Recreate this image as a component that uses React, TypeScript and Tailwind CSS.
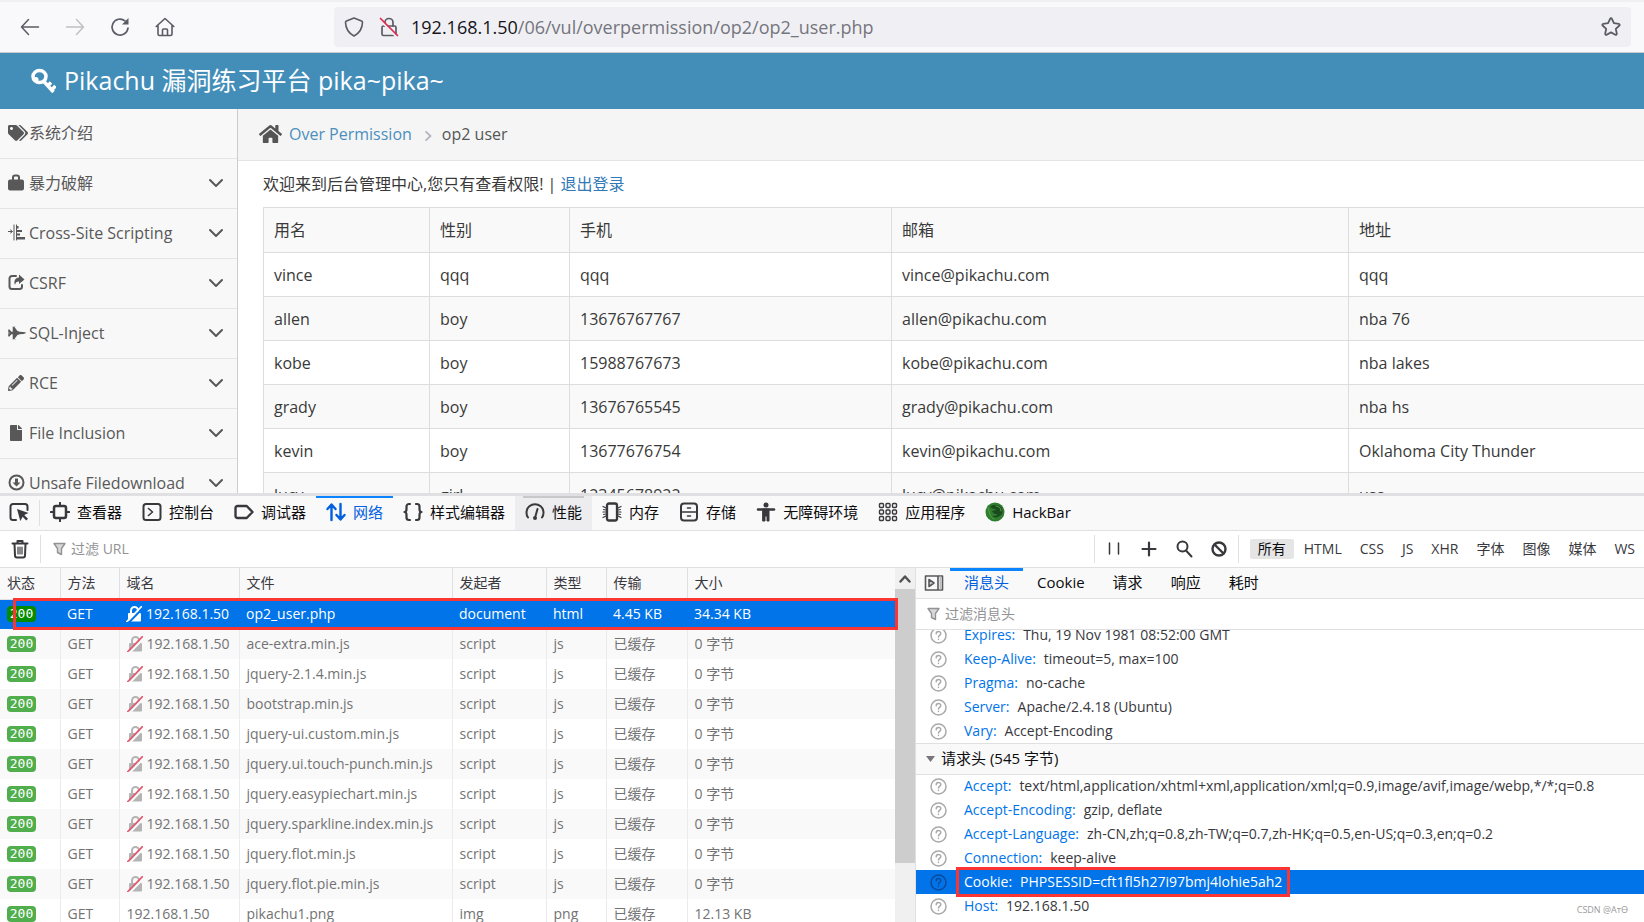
import { useState, type ReactNode } from 'react';
import { FaFighterJet, FaFile, FaHome, FaPencilAlt, FaTags } from 'react-icons/fa';

const MENU = [
  { label: '系统介绍', icon: 'tags' },
  { label: '暴力破解', icon: 'lock' },
  { label: 'Cross-Site Scripting', icon: 'indent' },
  { label: 'CSRF', icon: 'share' },
  { label: 'SQL-Inject', icon: 'jet' },
  { label: 'RCE', icon: 'pencil' },
  { label: 'File Inclusion', icon: 'file' },
  { label: 'Unsafe Filedownload', icon: 'down' },
];

const USERS = [
  ['vince', 'qqq', 'qqq', 'vince@pikachu.com', 'qqq'],
  ['allen', 'boy', '13676767767', 'allen@pikachu.com', 'nba 76'],
  ['kobe', 'boy', '15988767673', 'kobe@pikachu.com', 'nba lakes'],
  ['grady', 'boy', '13676765545', 'grady@pikachu.com', 'nba hs'],
  ['kevin', 'boy', '13677676754', 'kevin@pikachu.com', 'Oklahoma City Thunder'],
  ['lucy', 'girl', '12345678922', 'lucy@pikachu.com', 'usa'],
];

const TOOLS = [
  { label: '查看器', icon: 'inspector' },
  { label: '控制台', icon: 'console' },
  { label: '调试器', icon: 'debugger' },
  { label: '网络', icon: 'network' },
  { label: '样式编辑器', icon: 'style' },
  { label: '性能', icon: 'performance' },
  { label: '内存', icon: 'memory' },
  { label: '存储', icon: 'storage' },
  { label: '无障碍环境', icon: 'a11y' },
  { label: '应用程序', icon: 'apps' },
  { label: 'HackBar', icon: 'hackbar' },
];

const FILTERS = ['所有', 'HTML', 'CSS', 'JS', 'XHR', '字体', '图像', '媒体', 'WS'];

const script = (file: string) => ({ file, initiator: 'script', type: 'js', transfer: '已缓存', size: '0 字节', insecure: true });

const REQUESTS = [
  { file: 'op2_user.php', initiator: 'document', type: 'html', transfer: '4.45 KB', size: '34.34 KB', insecure: true },
  script('ace-extra.min.js'),
  script('jquery-2.1.4.min.js'),
  script('bootstrap.min.js'),
  script('jquery-ui.custom.min.js'),
  script('jquery.ui.touch-punch.min.js'),
  script('jquery.easypiechart.min.js'),
  script('jquery.sparkline.index.min.js'),
  script('jquery.flot.min.js'),
  script('jquery.flot.pie.min.js'),
  { file: 'pikachu1.png', initiator: 'img', type: 'png', transfer: '已缓存', size: '12.13 KB', insecure: false },
];

const RESPONSE_HEADERS = [
  ['Expires', 'Thu, 19 Nov 1981 08:52:00 GMT'],
  ['Keep-Alive', 'timeout=5, max=100'],
  ['Pragma', 'no-cache'],
  ['Server', 'Apache/2.4.18 (Ubuntu)'],
  ['Vary', 'Accept-Encoding'],
];

const REQUEST_HEADERS = [
  ['Accept', 'text/html,application/xhtml+xml,application/xml;q=0.9,image/avif,image/webp,*/*;q=0.8'],
  ['Accept-Encoding', 'gzip, deflate'],
  ['Accept-Language', 'zh-CN,zh;q=0.8,zh-TW;q=0.7,zh-HK;q=0.5,en-US;q=0.3,en;q=0.2'],
  ['Connection', 'keep-alive'],
  ['Cookie', 'PHPSESSID=cft1fl5h27i97bmj4lohie5ah2'],
  ['Host', '192.168.1.50'],
];

function Icon({ size = 20, box = 20, width = 2, children }: { size?: number; box?: number; width?: number; children: ReactNode }) {
  return (
    <svg
      width={size}
      height={size}
      viewBox={`0 0 ${box} ${box}`}
      fill="none"
      stroke="currentColor"
      strokeWidth={width}
      strokeLinecap="round"
      strokeLinejoin="round"
      className="shrink-0"
      aria-hidden="true"
    >
      {children}
    </svg>
  );
}

function MenuIcon({ name }: { name: string }) {
  switch (name) {
    case 'tags':
      return <FaTags className="h-[18px] w-5" />;
    case 'jet':
      return <FaFighterJet className="h-4 w-[18px]" />;
    case 'pencil':
      return <FaPencilAlt className="h-4 w-4" />;
    case 'file':
      return <FaFile className="h-4 w-4" />;
    case 'lock':
      return (
        <Icon size={17} box={17}>
          <path d="M5 6V3.5A2 2 0 0 1 7 1.5h2a2 2 0 0 1 2 2V6" />
          <rect x="1" y="6.500" width="14" height="9" rx="1" fill="currentColor" />
        </Icon>
      );
    case 'indent':
      return (
        <Icon size={17} box={17} width={1}>
          <path d="M0 7.500h4M2.500 6l2 1.500-2 1.500M6 1v15" />
          <path d="M8 2h2.500v2.500H8zM8 6h6v2H8zM8 9.500h4v2H8zM8 13h9v2.500H8z" fill="currentColor" stroke="none" />
          <path d="M8.500 1v15" />
        </Icon>
      );
    case 'share':
      return (
        <Icon size={17} box={17}>
          <path d="M8 2H4a2.500 2.500 0 0 0-2.500 2.500v8A2.500 2.500 0 0 0 4 15h7.500a2.500 2.500 0 0 0 2.500-2.500V11" />
          <path d="M11 .5 16.500 5.500 11 10V7.500C8.500 7.500 7.500 8.500 7 11 5.500 7 7 4 11 3.500z" fill="currentColor" stroke="none" />
        </Icon>
      );
    default:
      return (
        <Icon size={17} box={17}>
          <circle cx="8.500" cy="8.500" r="7" />
          <path d="M7 4.500h3v4h2.500l-4 4-4-4H7z" fill="currentColor" stroke="none" />
        </Icon>
      );
  }
}

function ToolIcon({ name }: { name: string }) {
  switch (name) {
    case 'inspector':
      return (
        <Icon>
          <rect x="4" y="4" width="12" height="12" rx="2" strokeWidth="2.5" />
          <path d="M10 .8V3M10 17v2.200M.8 10H3M17 10h2.200" />
        </Icon>
      );
    case 'console':
      return (
        <Icon>
          <rect x="1.500" y="2" width="17" height="16" rx="2.500" />
          <path d="m6.500 6.500 4 3.500-4 3.500" strokeWidth="1.600" />
        </Icon>
      );
    case 'debugger':
      return (
        <Icon width={2.4}>
          <path d="M3.500 4h9.200L18.500 10l-5.800 6H3.500a2 2 0 0 1-2-2V6a2 2 0 0 1 2-2z" />
        </Icon>
      );
    case 'network':
      return (
        <Icon width={2.4}>
          <path d="M5.500 18V3M1.500 7l4-4.500 4 4.500M14.500 2v15M10.500 13l4 4.500 4-4.500" />
        </Icon>
      );
    case 'style':
      return (
        <Icon width={2.2}>
          <path d="M7 2H6a2.500 2.500 0 0 0-2.500 2.500V7c0 2-1 3-2 3 1 0 2 1 2 3v2.500A2.500 2.500 0 0 0 6 18h1M13 2h1a2.500 2.500 0 0 1 2.500 2.500V7c0 2 1 3 2 3-1 0-2 1-2 3v2.500A2.500 2.500 0 0 1 14 18h-1" />
        </Icon>
      );
    case 'performance':
      return (
        <Icon>
          <path d="M3 15.500A8.500 8.500 0 1 1 17 15.500" />
          <path d="M12.500 7 10.500 14" />
          <circle cx="10" cy="16" r="2" fill="currentColor" stroke="none" />
        </Icon>
      );
    case 'memory':
      return (
        <Icon>
          <rect x="5" y="1.500" width="10" height="17" rx="2" strokeWidth="2.300" />
          <path d="M1 4.500 4 6M1 10h3M1 15.500 4 14M19 4.500 16 6M19 10h-3M19 15.500 16 14M1.500 7.500 4 8M1.500 12.500 4 12M18.500 7.500 16 8M18.500 12.500 16 12" strokeWidth="1.200" />
        </Icon>
      );
    case 'storage':
      return (
        <Icon>
          <rect x="2" y="1.500" width="16" height="17" rx="3" />
          <path d="M2 10h16M8.500 6h3M8.500 14h3" strokeWidth="1.600" />
        </Icon>
      );
    case 'a11y':
      return (
        <Icon>
          <circle cx="10" cy="3" r="2.500" fill="currentColor" stroke="none" />
          <path d="M2 7.500h16" strokeWidth="2.500" />
          <path d="M7 7h6v12h-2v-5H9v5H7z" fill="currentColor" strokeWidth="1" />
        </Icon>
      );
    case 'apps':
      return (
        <Icon width={1.4}>
          {[1.5, 8, 14.5].map((y) => [1.5, 8, 14.5].map((x) => <rect key={`${x}-${y}`} x={x} y={y} width="4" height="4" rx="1" />))}
        </Icon>
      );
    default:
      return (
        <Icon width={1}>
          <circle cx="10" cy="10" r="9.500" fill="#2f7d2f" stroke="none" />
          <path d="M5 5c3-3 8-3 11 0 2 3 2 6 0 8-3 3-7 3-9 1 2 0 5 0 6-2-3 1-5-1-6-3 2 0 3-1 4-2-3 0-4-1-6-2z" fill="#1c4a1f" stroke="none" />
          <path d="M3 6c2 5 1 8 6 11" stroke="#57a34b" />
          <path d="M11 4c3 0 5 2 5 5" stroke="#57a34b" />
        </Icon>
      );
  }
}

function Funnel() {
  return (
    <Icon size={14} box={14} width={1.4}>
      <path d="M1 1.500h11L8.500 6.500V12.500l-4-2v-4z" fill="#d8d8da" />
    </Icon>
  );
}

function BrokenLock({ selected }: { selected: boolean }) {
  return (
    <svg width="16" height="16" viewBox="1 1 16 16" fill="none" className="shrink-0" aria-hidden="true">
      <path d="M6 8V5.500a3.500 3.500 0 0 1 7 0V8" stroke={selected ? '#fff' : '#b4b4b5'} strokeWidth="2" />
      <rect x="3" y="8" width="13" height="8.500" rx="1" fill={selected ? '#fff' : '#b4b4b5'} />
      <path d="M3 18.500 18 3" stroke={selected ? '#0074e8' : '#f9f9fa'} strokeWidth="2" />
      <path d="M1.800 16.500 16.500 1.500" stroke={selected ? '#fff' : '#e5566d'} strokeWidth="1.600" strokeLinecap="round" />
    </svg>
  );
}

function HeaderRow({ name, value, selected = false }: { name: string; value: string; selected?: boolean }) {
  return (
    <div className={`flex h-6 shrink-0 items-center pl-3.5 ${selected ? 'bg-[#0074e8] text-white' : 'text-[#38383d]'}`}>
      <a href="#help" aria-label={`${name} help`} className={selected ? 'text-[#0a4a9c]' : 'text-[#a9a9ac]'}>
        <Icon size={17} box={17} width={1.5}>
          <circle cx="8.500" cy="8.500" r="7.500" />
          <path d="M6.200 6.800c0-3 4.600-3 4.600-.2 0 1.700-2.300 1.700-2.300 3.400M8.500 12.300v.2" />
        </Icon>
      </a>
      <div className="relative ml-[17px] whitespace-nowrap">
        <span className={selected ? '' : 'text-[#0074e8]'}>{name}:</span>
        <span className="ml-2">{value}</span>
        {selected && <span className="absolute -inset-x-2 -inset-y-[5px] border-3 border-[#fb3434]" />}
      </div>
    </div>
  );
}

function BrowserBar() {
  return (
    <header className="flex h-[53px] shrink-0 items-center border-t-2 border-b border-t-[#f0f0f4] border-b-[#ccccce] bg-[#f9f9fb] pr-[13px] pl-5 text-[#5b5b66]">
      <nav className="flex items-center gap-[25px]">
        <button aria-label="后退">
          <Icon width={1.5}>
            <path d="M18.500 10H1.500M8.500 2.500 1.500 10l7 7.500" />
          </Icon>
        </button>
        <button aria-label="前进" disabled className="text-[#c0c0c5]">
          <Icon width={1.5}>
            <path d="M1.500 10h17M11.500 2.500l7 7.500-7 7.500" />
          </Icon>
        </button>
        <button aria-label="刷新">
          <Icon width={1.7}>
            <path d="M18 11a8 8 0 1 1-3-7.200" />
            <path d="M18.500 1v6.500H12z" fill="currentColor" stroke="none" />
          </Icon>
        </button>
        <button aria-label="主页">
          <Icon width={1.6}>
            <path d="m1.200 9.500 8.800-8 8.800 8M3 8.500V17a1.500 1.500 0 0 0 1.500 1.500h11A1.500 1.500 0 0 0 17 17V8.500M7.500 18.500V13a1 1 0 0 1 1-1h3a1 1 0 0 1 1 1v5.500" />
          </Icon>
        </button>
      </nav>
      <div className="ml-[159px] flex h-10 flex-1 items-center rounded bg-[#f0f0f4] px-2.5">
        <Icon width={1.6}>
          <path d="M10 1 2.500 4c-.7.300-1 .7-1 1.400.2 6 2.500 10.500 8.500 13.600 6-3.100 8.300-7.600 8.500-13.600 0-.7-.3-1.100-1-1.400z" />
        </Icon>
        <span className="ml-[15px]">
          <Icon width={1.7}>
            <path d="M6 9V5.500a4 4 0 0 1 8 0V9" />
            <rect x="3" y="9" width="14" height="9.500" rx="1.500" />
            <path d="M1.500 3.500 17 19.500" stroke="#f0f0f4" strokeWidth="2" />
            <path d="M1.500 1.500 18.500 18.500" stroke="#e22850" />
          </Icon>
        </span>
        <div className="ml-3 flex-1 text-lg text-[#75757d]">
          <span className="text-[#15141a]">192.168.1.50</span>/06/vul/overpermission/op2/op2_user.php
        </div>
        <button aria-label="添加书签">
          <Icon width={1.8}>
            <path d="M9.100 1.800a1 1 0 0 1 1.800 0l2 4.400 4.900.6a1 1 0 0 1 .6 1.700l-3.600 3.300 1 4.900a1 1 0 0 1-1.500 1L10 15.400l-4.300 2.300a1 1 0 0 1-1.500-1l1-4.900L1.600 8.500a1 1 0 0 1 .6-1.700l4.900-.6z" />
          </Icon>
        </button>
      </div>
    </header>
  );
}

function SitePage() {
  return (
    <div className="flex min-h-0 flex-1 flex-col overflow-hidden text-base">
      <div className="flex h-14 shrink-0 items-center bg-[#438eb9] pl-[30px] text-white">
        <svg width="26" height="26" viewBox="0 0 26 26" fill="none" stroke="currentColor" aria-hidden="true">
          <ellipse cx="9.500" cy="8.500" rx="6.500" ry="6" strokeWidth="3.500" />
          <path d="M13 12.500 23.500 24" strokeWidth="3.500" />
          <path d="m17.500 18 3.500-3.500M21.500 22l4-4" strokeWidth="3.500" />
          <circle cx="6" cy="11.500" r="2.500" fill="currentColor" stroke="none" />
        </svg>
        <h1 className="ml-2 text-[25px]">Pikachu 漏洞练习平台 pika~pika~</h1>
      </div>
      <div className="flex min-h-0 flex-1">
        <ul className="w-[238px] shrink-0 overflow-hidden border-r border-[#ccc] bg-[#f8f8f8] text-[#585858]">
          {MENU.map((item, i) => (
            <li key={item.label}>
              <a href="#menu" className="flex h-[50px] items-center border-b border-[#e5e5e5] pr-3.5 pb-0.5 pl-2">
                <span className="flex w-[21px] shrink-0">
                  <MenuIcon name={item.icon} />
                </span>
                <span className="flex-1">{item.label}</span>
                {i > 0 && (
                  <Icon size={14} box={14}>
                    <path d="m1 4 6 6 6-6" />
                  </Icon>
                )}
              </a>
            </li>
          ))}
        </ul>
        <main className="min-w-0 flex-1 bg-white text-[#393939]">
          <nav className="flex h-[52px] items-center border-b border-[#e5e5e5] bg-[#f5f5f5] pb-0.5 pl-[21px] text-[#555]">
            <FaHome className="h-6 w-[23px]" />
            <a href="#over" className="ml-[7px] text-[#4c8fbd]">
              Over Permission
            </a>
            <span className="mt-1 mr-2 ml-3 text-[#b2b6bf]">
              <Icon size={10} box={10} width={1.8}>
                <path d="m2 .8 4.500 4.200L2 9.200" />
              </Icon>
            </span>
            <span>op2 user</span>
          </nav>
          <div className="pl-[25px]">
            <p className="flex h-[46px] items-center">
              <span>欢迎来到后台管理中心,您只有查看权限! |&nbsp;</span>
              <a href="#logout" className="text-[#337ab7]">
                退出登录
              </a>
            </p>
            <table className="w-full table-fixed border-collapse">
              <colgroup>
                <col className="w-[166px]" />
                <col className="w-[140px]" />
                <col className="w-[322px]" />
                <col className="w-[457px]" />
                <col />
              </colgroup>
              <thead>
                <tr className="h-[45px] bg-[#f9f9f9] text-left">
                  {['用名', '性别', '手机', '邮箱', '地址'].map((h) => (
                    <th key={h} className="border border-r-0 border-[#ddd] px-2.5 font-normal">
                      {h}
                    </th>
                  ))}
                </tr>
              </thead>
              <tbody>
                {USERS.map((row) => (
                  <tr key={row[0]} className="h-11 even:bg-[#f9f9f9]">
                    {row.map((cell, i) => (
                      <td key={i} className="border border-r-0 border-[#ddd] px-2.5">
                        {cell}
                      </td>
                    ))}
                  </tr>
                ))}
              </tbody>
            </table>
          </div>
        </main>
      </div>
    </div>
  );
}

function RequestList() {
  const [selected, setSelected] = useState(0);

  return (
    <div className="flex min-h-0 overflow-hidden">
      <div className="relative min-w-0 flex-1">
        <table className="w-full table-fixed border-collapse text-sm text-[#737373]">
          <colgroup>
            <col className="w-[60px]" />
            <col className="w-[59px]" />
            <col className="w-[120px]" />
            <col className="w-[213px]" />
            <col className="w-[94px]" />
            <col className="w-[60px]" />
            <col className="w-[81px]" />
            <col />
          </colgroup>
          <thead>
            <tr className="h-[31px] border-b border-[#e0e0e2] bg-[#f9f9fa] text-left text-[#38383d]">
              {['状态', '方法', '域名', '文件', '发起者', '类型', '传输', '大小'].map((h) => (
                <th key={h} className="border-r border-[#e0e0e2] px-[7px] font-normal last:border-r-0">
                  {h}
                </th>
              ))}
            </tr>
          </thead>
          <tbody>
            {REQUESTS.map((r, i) => {
              const active = i === selected;
              const line = active ? 'px-[7px]' : 'border-r border-[#ebebed] px-[7px]';
              return (
                <tr
                  key={r.file}
                  onClick={() => setSelected(i)}
                  className={`h-[30px] whitespace-nowrap ${active ? 'bg-[#0074e8] text-white' : 'odd:bg-white even:bg-[#f9f9fa]'}`}
                >
                  <td className={line}>
                    <span
                      className={`flex h-4 w-[29px] items-center justify-center rounded font-['DejaVu_Sans_Mono',monospace] text-[13px] text-white ${active ? 'bg-[#058b00]' : 'bg-[#50ae4c]'}`}
                    >
                      200
                    </span>
                  </td>
                  <td className={line}>GET</td>
                  <td className={line}>
                    <span className="flex items-center gap-1">
                      {r.insecure && <BrokenLock selected={active} />}
                      192.168.1.50
                    </span>
                  </td>
                  <td className={line}>{r.file}</td>
                  <td className={line}>{r.initiator}</td>
                  <td className={line}>{r.type}</td>
                  <td className={line}>{r.transfer}</td>
                  <td className="px-[7px]">{r.size}</td>
                </tr>
              );
            })}
          </tbody>
        </table>
        <div className="absolute top-[30px] -right-[3px] left-[13px] z-10 h-8 border-3 border-[#fb3434]" />
      </div>
      <div className="flex w-5 shrink-0 flex-col bg-[#f0f0f0]">
        <button aria-label="向上滚动" className="flex h-[21px] items-center justify-center text-[#505050]">
          <Icon size={12} box={12} width={2.4}>
            <path d="m1.500 8.500 4.500-5 4.500 5" />
          </Icon>
        </button>
        <div className="h-[274px] bg-[#cdcdcd]" />
      </div>
    </div>
  );
}

function RequestDetails() {
  const [tab, setTab] = useState('消息头');

  return (
    <div className="flex min-h-0 min-w-0 flex-col overflow-hidden border-l border-[#e0e0e2] text-sm">
      <div className="flex h-[31px] shrink-0 border-b border-[#e0e0e2] bg-[#f9f9fa] text-[15px] text-[#0c0c0d]">
        <button aria-label="隐藏详情" className="mr-1.5 ml-2 text-[#58585a]">
          <Icon width={1.6}>
            <path d="M1.500 3h17v14h-17zM14 3v14" />
            <path d="M16.300 4v12" stroke="#bbb" />
            <path d="m5 6.500 5 3.500-5 3.500z" fill="#d0d0d2" />
          </Icon>
        </button>
        {['消息头', 'Cookie', '请求', '响应', '耗时'].map((t) => (
          <button
            key={t}
            onClick={() => setTab(t)}
            className={`border-t-3 px-3.5 pb-1 ${t === tab ? 'border-[#0a84ff] text-[#0060df]' : 'border-transparent'}`}
          >
            {t}
          </button>
        ))}
      </div>
      <label className="flex h-[31px] shrink-0 items-center gap-1 border-b border-[#e0e0e2] pl-[11px] text-[#939395]">
        <Funnel />
        <input aria-label="过滤消息头" placeholder="过滤消息头" className="flex-1 outline-none placeholder:text-[#939395]" />
      </label>
      <div className="flex h-[113px] shrink-0 flex-col justify-end overflow-hidden">
        {RESPONSE_HEADERS.map(([name, value]) => (
          <HeaderRow key={name} name={name} value={value} />
        ))}
      </div>
      <button className="flex h-8 shrink-0 items-center gap-1.5 border-y border-[#e0e0e2] bg-[#f9f9fa] pl-2.5 text-[#0c0c0d]">
        <svg width="9" height="6" viewBox="0 0 9 6" fill="#77777b" aria-hidden="true">
          <path d="M0 0h9L4.500 6z" />
        </svg>
        <span className="text-[15px]">请求头 (545 字节)</span>
      </button>
      <div className="-mt-px">
        {REQUEST_HEADERS.map(([name, value]) => (
          <HeaderRow key={name} name={name} value={value} selected={name === 'Cookie'} />
        ))}
      </div>
    </div>
  );
}

function DevTools() {
  const [tool, setTool] = useState('网络');
  const [filter, setFilter] = useState('所有');

  return (
    <section className="flex h-[429px] shrink-0 flex-col border-t-3 border-[#e0e0e2] bg-white text-[#38383d]">
      <div className="flex h-[35px] shrink-0 items-stretch border-b border-[#e0e0e2] bg-[#f9f9fa] text-[15px] text-[#0c0c0d]">
        <button aria-label="选取元素" className="pr-2.5 pb-0.5 pl-[9px] text-[#38383d]">
          <Icon>
            <path d="M7 18H4a2.500 2.500 0 0 1-2.500-2.500v-11A2.500 2.500 0 0 1 4 2h12a2.500 2.500 0 0 1 2.500 2.500V8" />
            <path d="m8 7 3.300 12 2.400-4.300L17.200 18.500l1.800-1.800-3.800-3.700L19.500 11z" fill="currentColor" stroke="none" />
          </Icon>
        </button>
        <span className="my-1 w-px bg-[#e0e0e2]" />
        {TOOLS.map((t) => (
          <button
            key={t.label}
            onClick={() => setTool(t.label)}
            className={`relative flex items-center gap-[7px] px-2.5 pb-0.5 ${t.label === tool ? 'text-[#0060df]' : ''} ${t.label === '性能' ? 'bg-[#ededf0]' : ''}`}
          >
            {t.label === tool && <span className="absolute inset-x-0 top-0 h-0.5 bg-[#0a84ff]" />}
            {t.label === '性能' && <span className="absolute right-2 left-2 top-0 h-0.5 bg-[#c8c8ca]" />}
            <span className={t.label === tool ? '' : 'text-[#38383d]'}>
              <ToolIcon name={t.icon} />
            </span>
            {t.label}
          </button>
        ))}
      </div>
      <div className="flex h-[37px] shrink-0 items-center border-b border-[#e0e0e2] text-sm">
        <button aria-label="清除" className="px-2.5">
          <Icon>
            <path d="M2.500 4.500h15M7.500 4V2h5v2M4.500 5l.5 11.500A2 2 0 0 0 7 18.500h6a2 2 0 0 0 2-2L15.500 5" />
            <path d="M8 8v7M10 8v7M12 8v7" strokeWidth="1.200" />
          </Icon>
        </button>
        <span className="h-7 w-px bg-[#e0e0e2]" />
        <label className="flex min-w-0 flex-1 items-center gap-1 pl-3 text-[#939395]">
          <Funnel />
          <input aria-label="过滤 URL" placeholder="过滤 URL" className="flex-1 outline-none placeholder:text-[#939395]" />
        </label>
        <span className="h-7 w-px bg-[#e0e0e2]" />
        <div className="flex items-center gap-[17px] px-2.5">
          <button aria-label="暂停">
            <Icon size={18} box={18} width={1.5}>
              <path d="M4.500 3v11M13.500 3v11" />
            </Icon>
          </button>
          <button aria-label="添加">
            <Icon size={18} box={18} width={2.2}>
              <path d="M9 2.500v13M2.500 9h13" />
            </Icon>
          </button>
          <button aria-label="搜索">
            <Icon size={18} box={18}>
              <circle cx="7.500" cy="6.500" r="5" />
              <path d="m11 10.500 5.500 6" />
            </Icon>
          </button>
          <button aria-label="屏蔽">
            <Icon size={18} box={18} width={2.4}>
              <circle cx="9" cy="9" r="6.500" />
              <path d="m4.500 4.500 9 9" />
            </Icon>
          </button>
        </div>
        <span className="h-7 w-px bg-[#e0e0e2]" />
        <div className="mr-px ml-[11px] flex gap-0.5">
          {FILTERS.map((f) => (
            <button
              key={f}
              onClick={() => setFilter(f)}
              className={`h-5 rounded-xs px-2 leading-5 ${f === filter ? 'bg-[#e5e5e6] text-[#0c0c0d]' : ''}`}
            >
              {f}
            </button>
          ))}
        </div>
      </div>
      <div className="grid min-h-0 flex-1 grid-cols-[915fr_729fr]">
        <RequestList />
        <RequestDetails />
      </div>
    </section>
  );
}

export default function App() {
  return (
    <div className="relative flex h-screen flex-col overflow-hidden bg-white font-['Open_Sans','Noto_Sans_CJK_SC',sans-serif]">
      <BrowserBar />
      <SitePage />
      <DevTools />
      <span className="absolute right-4 bottom-1.5 text-[9px] text-[#9a9a9a]">CSDN @AтӨ</span>
    </div>
  );
}
